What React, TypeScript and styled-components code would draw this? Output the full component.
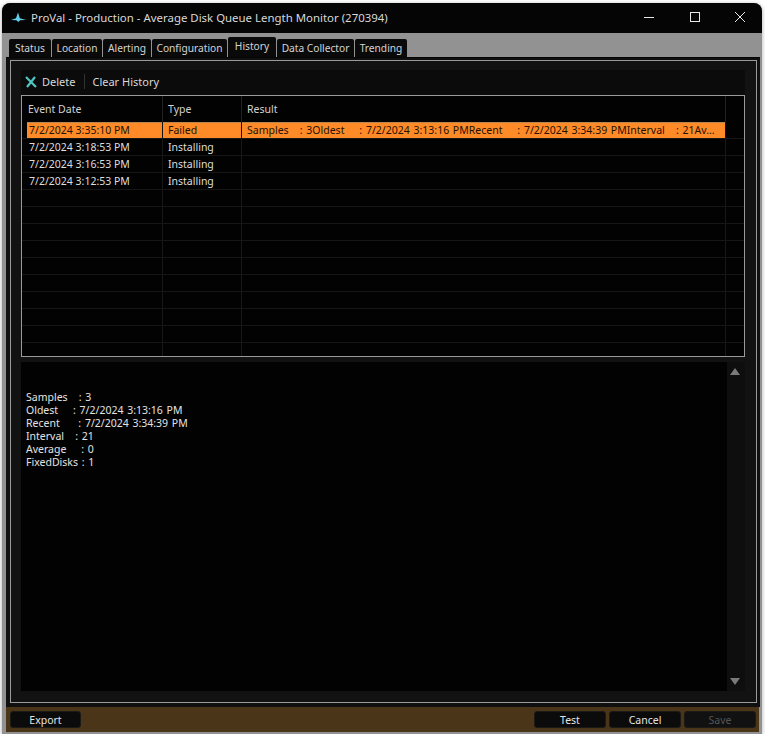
import React from "react";
import styled, { createGlobalStyle } from "styled-components";

const Global = createGlobalStyle`
  html, body { margin: 0; padding: 0; background: #fff; }
  body { font-family: "Noto Sans", "Open Sans", sans-serif; font-size: 11px; color: #e8e8e8; }
`;
const Win = styled.div`
  margin: 3px 0 0 2px; width: 760px; height: 731px; display: flex; flex-direction: column;
  background: #929292; border-radius: 8px 8px 0 0; overflow: hidden; box-shadow: 0 1px 4px rgba(0,0,0,.35);
`;
const TitleBar = styled.div`
  height: 30px; box-sizing: border-box; padding: 0 1px 2px 9px; flex: none; background: #050505; display: flex; align-items: center; color: #d8d8d8;
`;
const TitleText = styled.span` margin-left: 5px; font-size: 11.43px; flex: 1; white-space: pre; `;
const WinBtn = styled.div` width: 42px; margin-left: 3.5px; height: 28px; display: flex; align-items: center; justify-content: center; `;
const Tabs = styled.div` height: 24px; flex: none; padding: 5px 0 0 7px; box-sizing: border-box; display: flex; align-items: flex-end; gap: 1px; `;
const Tab = styled.div<{ $active?: boolean; $w: number }>`
  width: ${p => p.$w}px; height: ${p => (p.$active ? 20 : 18)}px; padding-bottom: ${p => (p.$active ? 2 : 0)}px; background: #0a0a0a;
  border-radius: 2px 2px 0 0; display: flex; align-items: center; justify-content: center; font-size: 10.2px; color: #d4d4d4; white-space: pre;
  box-sizing: border-box;
`;
const TabBody = styled.div` flex: 1; min-height: 0; margin: 0 2px 0 4px; background: #101010; padding: 2px 3px 4px 4px; border-top: 1px solid #050505; `;
const Frame = styled.div` height: 100%; box-sizing: border-box; border: 1px solid #9a9a9a; padding: 9px 11px 11px 10px; display: flex; flex-direction: column; background: #121212; `;
const Toolbar = styled.div` height: 25px; box-sizing: border-box; padding: 0 0 2px 4px; flex: none; background: #0b0b0b; display: flex; align-items: center; font-size: 11px; color: #d8d8d8; `;
const ToolLabel = styled.span` margin-left: 5px; `;
const Sep = styled.div` width: 1px; height: 15px; background: #333; margin: 0 7px 0 9px; `;
const Grid = styled.div` height: 262px; flex: none; box-sizing: border-box; border: 1px solid #9a9a9a; background: #020202; overflow: hidden; `;
const HeaderRow = styled.div` height: 26px; display: grid; grid-template-columns: 141px 79px 484px 1fr; align-items: stretch; `;
const HeaderCell = styled.div<{ $first?: boolean }>` border-right: 1px solid #222; padding: 6px 0 0 ${p => (p.$first ? 6 : 5)}px; font-size: 10.5px; color: #d2d2d2; `;
const Row = styled.div`
  height: 17px; box-sizing: border-box; display: grid; grid-template-columns: 141px 79px 484px 1fr; border-bottom: 1px solid #161616;
  color: #dedede; font-size: 10.5px; line-height: 16px;
`;
const Cell = styled.div<{ $sel?: boolean; $first?: boolean }>`
  border-right: 1px solid ${p => (p.$sel ? "#111" : "#181818")};
  ${p => p.$first ? "margin-left: 5px; padding-left: 2px;" : "padding-left: 5px;"}
  white-space: pre; overflow: hidden; word-spacing: ${p => (p.$sel && !p.$first ? 1 : 0)}px;
  ${p => p.$sel ? "background: #ff8a28; color: #231206; box-shadow: inset 0 1px 0 #b8864e;" : ""}
`;
const End = styled.div``;
const Details = styled.div` flex: 1; min-height: 0; margin-top: 5px; background: #020202; display: flex; `;
const DetailText = styled.div` flex: 1; padding: 29px 0 0 5px; font-size: 10.5px; line-height: 13px; white-space: pre; color: #e2e2e2; word-spacing: 1px; `;
const Scroll = styled.div` width: 18px; background: #0e0e0e; display: flex; flex-direction: column; justify-content: space-between; align-items: center; padding: 6px 2px 6px 0; box-sizing: border-box; `;
const Footer = styled.div` height: 25px; flex: none; margin: 0 3px 2px 4px; background: #4b3518; display: flex; align-items: center; padding: 0 3px 0 4px; gap: 3px; `;
const Btn = styled.div<{ $off?: boolean; $narrow?: boolean }>`
  width: ${p => (p.$narrow ? 71 : 72)}px; height: 17px; background: ${p => (p.$off ? "#111" : "#0b0b0b")}; border-radius: 3px; border: 1px solid #1c1a16;
  display: flex; align-items: center; justify-content: center; box-sizing: border-box; font-size: 10.5px; color: ${p => (p.$off ? "#555" : "#e4e4e4")};
`;
const Spacer = styled.div` flex: 1; `;

const tabs: [string, number][] = [["Status", 42], ["Location", 50], ["Alerting", 48], ["Configuration", 75], ["History", 48], ["Data Collector", 77], ["Trending", 52]];
const rows = [
  ["7/2/2024 3:18:53 PM", "Installing"],
  ["7/2/2024 3:16:53 PM", "Installing"],
  ["7/2/2024 3:12:53 PM", "Installing"],
  ...Array.from({ length: 10 }, () => ["", ""]),
];

export default function App() {
  return (
    <>
      <Global />
      <Win>
        <TitleBar>
          <svg width="15" height="11" viewBox="0 0 15 11"><path d="M0 8 L5 6.2 L7 0.5 L8.8 6.2 L15 8 L9.2 8.3 L7.2 10 L5.4 8.3 Z" fill="#5fd0e8" /></svg>
          <TitleText>ProVal - Production - Average Disk Queue Length Monitor (270394)</TitleText>
          <WinBtn><svg width="12" height="12"><path d="M1 6.5H11" stroke="#e8e8e8" /></svg></WinBtn>
          <WinBtn><svg width="12" height="12"><rect x="1.5" y="1.5" width="9" height="9" fill="none" stroke="#e8e8e8" /></svg></WinBtn>
          <WinBtn><svg width="12" height="12"><path d="M1 1L11 11M11 1L1 11" stroke="#e8e8e8" /></svg></WinBtn>
        </TitleBar>
        <Tabs>
          {tabs.map(([t, w]) => (
            <Tab key={t} $w={w} $active={t === "History"}>{t}</Tab>
          ))}
        </Tabs>
        <TabBody>
          <Frame>
            <Toolbar>
              <svg width="12" height="12" viewBox="0 0 12 12"><path d="M1 1L11 11M10 1L2 11" stroke="#4fc4c0" strokeWidth="2.2" /></svg>
              <ToolLabel>Delete</ToolLabel>
              <Sep />
              <span>Clear History</span>
            </Toolbar>
            <Grid>
              <HeaderRow>
                <HeaderCell $first>Event Date</HeaderCell>
                <HeaderCell>Type</HeaderCell>
                <HeaderCell>Result</HeaderCell>
                <End />
              </HeaderRow>
              <Row>
                <Cell $sel $first>7/2/2024 3:35:10 PM</Cell>
                <Cell $sel>Failed</Cell>
                <Cell $sel>{"Samples   : 3Oldest    : 7/2/2024 3:13:16 PMRecent    : 7/2/2024 3:34:39 PMInterval   : 21Av..."}</Cell>
                <End />
              </Row>
              {rows.map((r, i) => (
                <Row key={i}>
                  <Cell $first>{r[0]}</Cell>
                  <Cell>{r[1]}</Cell>
                  <Cell />
                  <End />
                </Row>
              ))}
            </Grid>
            <Details>
              <DetailText>{"Samples   : 3\nOldest    : 7/2/2024 3:13:16 PM\nRecent     : 7/2/2024 3:34:39 PM\nInterval   : 21\nAverage    : 0\nFixedDisks : 1"}</DetailText>
              <Scroll>
                <svg width="10" height="7"><path d="M5 0L10 7H0Z" fill="#7a7a7a" /></svg>
                <svg width="10" height="7"><path d="M0 0H10L5 7Z" fill="#7a7a7a" /></svg>
              </Scroll>
            </Details>
          </Frame>
        </TabBody>
        <Footer>
          <Btn $narrow>Export</Btn>
          <Spacer />
          <Btn>Test</Btn>
          <Btn>Cancel</Btn>
          <Btn $off>Save</Btn>
        </Footer>
      </Win>
    </>
  );
}
